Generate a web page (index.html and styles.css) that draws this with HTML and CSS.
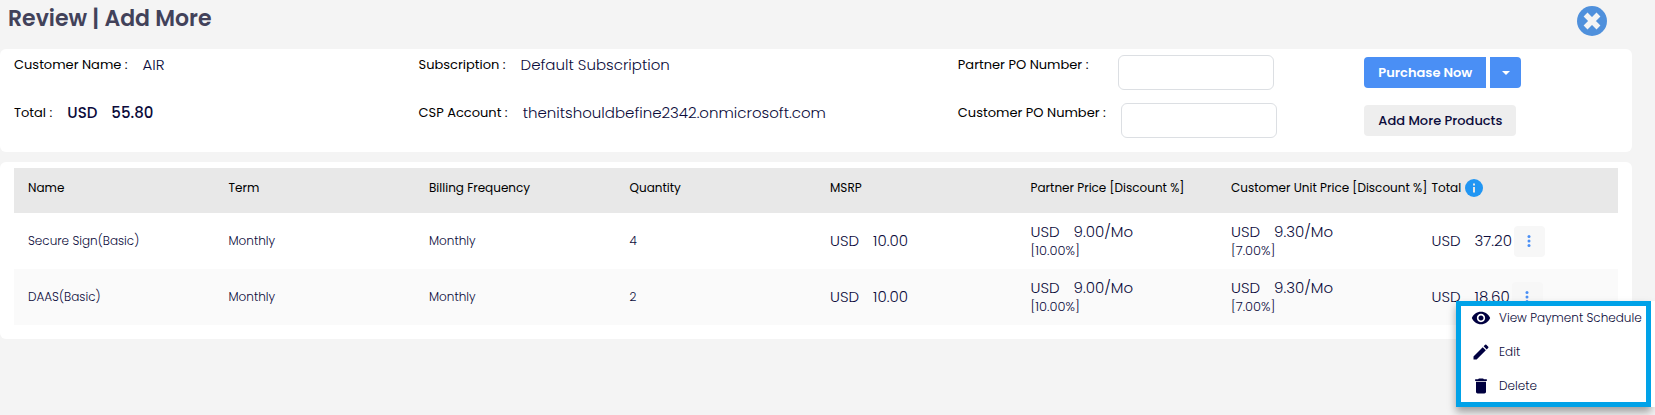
FILE: index.html
```html
<!DOCTYPE html>
<html lang="en">
<head>
<meta charset="utf-8">
<title>Review | Add More</title>
<link rel="stylesheet" href="styles.css">
</head>
<body>
<header class="page-head">
  <h1 class="title">Review | Add More</h1>
  <button class="close" type="button" aria-label="Close">
    <svg viewBox="0 0 30 30" width="30" height="30"><circle cx="15" cy="15" r="15" fill="#4f90dc"/><path d="M10.500 10.500l9 9M19.500 10.500l-9 9" stroke="#f4f4f4" stroke-width="5.500" stroke-linecap="square"/></svg>
  </button>
</header>
<main class="content">
  <section class="card summary">
    <dl class="facts">
      <div class="fact"><dt>Customer Name :</dt><dd>AIR</dd></div>
      <div class="fact"><dt>Total :</dt><dd class="money strong"><span>USD</span><span>55.80</span></dd></div>
    </dl>
    <dl class="facts">
      <div class="fact"><dt>Subscription :</dt><dd>Default Subscription</dd></div>
      <div class="fact"><dt>CSP Account :</dt><dd>thenitshouldbefine2342.onmicrosoft.com</dd></div>
    </dl>
    <div class="facts">
      <div class="fact"><label class="po-label" for="partner-po">Partner PO Number :</label><input class="field" id="partner-po" type="text"></div>
      <div class="fact"><label class="po-label" for="customer-po">Customer PO Number :</label><input class="field" id="customer-po" type="text"></div>
    </div>
    <div class="actions">
      <div class="split">
        <button class="btn primary start" type="button">Purchase Now</button>
        <button class="btn primary toggle" type="button" aria-label="More purchase options"><svg viewBox="0 0 8 4" width="8" height="4"><path d="M0 0h8L4 4z" fill="#fff"/></svg></button>
      </div>
      <button class="btn plain" type="button">Add More Products</button>
    </div>
  </section>
  <section class="card listing">
    <table class="items">
      <thead>
        <tr><th>Name</th><th>Term</th><th>Billing Frequency</th><th>Quantity</th><th>MSRP</th><th>Partner Price [Discount %]</th><th>Customer Unit Price [Discount %]</th>
        <th><span class="total-head">Total <svg viewBox="0 0 18 18" width="18" height="18" role="img" aria-label="Info"><circle cx="9" cy="9" r="9" fill="#2196f3"/><path d="M8 4.500h2v2H8zM8 8h2v5.500H8z" fill="#e8e8e8"/></svg></span></th></tr>
      </thead>
      <tbody>
        <tr>
          <td>Secure Sign(Basic)</td><td>Monthly</td><td>Monthly</td><td>4</td>
          <td><span class="money"><span>USD</span><span>10.00</span></span></td>
          <td><span class="money"><span>USD</span><span>9.00/Mo</span></span><span class="pct">[10.00%]</span></td>
          <td><span class="money"><span>USD</span><span>9.30/Mo</span></span><span class="pct">[7.00%]</span></td>
          <td><div class="total"><span class="money"><span>USD</span><span>37.20</span></span><button class="more" type="button" aria-label="Actions"><svg viewBox="0 0 4 12" width="4" height="12" fill="#4a8ff5"><circle cx="2" cy="1.500" r="1.500"/><circle cx="2" cy="6" r="1.500"/><circle cx="2" cy="10.500" r="1.500"/></svg></button></div></td>
        </tr>
        <tr>
          <td>DAAS(Basic)</td><td>Monthly</td><td>Monthly</td><td>2</td>
          <td><span class="money"><span>USD</span><span>10.00</span></span></td>
          <td><span class="money"><span>USD</span><span>9.00/Mo</span></span><span class="pct">[10.00%]</span></td>
          <td><span class="money"><span>USD</span><span>9.30/Mo</span></span><span class="pct">[7.00%]</span></td>
          <td class="anchor"><div class="total"><span class="money"><span>USD</span><span>18.60</span></span><button class="more" type="button" aria-label="Actions"><svg viewBox="0 0 4 12" width="4" height="12" fill="#4a8ff5"><circle cx="2" cy="1.500" r="1.500"/><circle cx="2" cy="6" r="1.500"/><circle cx="2" cy="10.500" r="1.500"/></svg></button></div>
            <div class="menu">
              <button class="menu-item" type="button"><svg viewBox="0 0 24 24" width="20" height="20"><path d="M12 4.500C7 4.500 2.730 7.610 1 12c1.730 4.390 6 7.500 11 7.500s9.270-3.110 11-7.500c-1.730-4.390-6-7.500-11-7.500zM12 17c-2.760 0-5-2.240-5-5s2.240-5 5-5 5 2.240 5 5-2.240 5-5 5zm0-8c-1.660 0-3 1.340-3 3s1.340 3 3 3 3-1.340 3-3-1.340-3-3-3z"/></svg>View Payment Schedule</button>
              <button class="menu-item" type="button"><svg viewBox="0 0 24 24" width="20" height="20"><path d="M3 17.250V21h3.750L17.810 9.940l-3.750-3.750L3 17.250zM20.710 7.040a1 1 0 0 0 0-1.410l-2.340-2.340a1 1 0 0 0-1.410 0l-1.830 1.830 3.750 3.750 1.830-1.830z"/></svg>Edit</button>
              <button class="menu-item" type="button"><svg viewBox="0 0 24 24" width="20" height="20"><path d="M6 19c0 1.100.9 2 2 2h8c1.100 0 2-.9 2-2V7H6v12zM19 4h-3.500l-1-1h-5l-1 1H5v2h14V4z"/></svg>Delete</button>
            </div>
          </td>
        </tr>
      </tbody>
    </table>
  </section>
</main>
</body>
</html>
```
FILE: styles.css
```css
* { box-sizing: border-box; }
body {
  margin: 0;
  min-height: 100vh;
  background: #f4f4f4;
  color: #0b0b3b;
  font-family: Poppins, Inter, "Open Sans", sans-serif;
  font-size: 13px;
  line-height: 20px;
}
button, input { font: inherit; color: inherit; }
button { border: 0; padding: 0; cursor: pointer; }
svg { display: block; flex: none; }

.page-head {
  display: flex;
  justify-content: space-between;
  align-items: flex-start;
  padding: 6px 48px 7px 8px;
}
.title { margin: 0; font-size: 22px; line-height: 26px; font-weight: 600; color: #42425a; }
.close { background: none; border-radius: 50%; height: 30px; margin-bottom: 6px; }

.content { display: grid; gap: 10px; margin-right: 23px; }
.card { background: #fff; border-radius: 6px; }

.summary {
  display: grid;
  grid-template-columns: 3fr 4fr 3fr 2fr;
  padding: 6px 0 14px 14px;
}
.facts { display: grid; grid-auto-rows: 35px; gap: 13px; margin: 0; }
.fact { display: flex; align-items: flex-start; gap: 15px; }
dt, .po-label { color: #000; font-size: 13px; font-weight: 400; white-space: nowrap; }
dd { margin: 0; font-size: 15px; font-weight: 300; white-space: nowrap; }
.field {
  width: 156px;
  height: 35px;
  padding: 0 10px;
  border: 1px solid #dcdfe3;
  border-radius: 6px;
  background: #fff;
}
.po-label { min-width: 145px; }
.money { display: flex; gap: 14px; font-size: 15px; font-weight: 300; white-space: nowrap; }
.money.strong { font-weight: 500; }

.actions { display: grid; grid-auto-rows: 31px; gap: 17px; padding: 2px 0 0 2px; justify-items: start; }
.split { display: flex; gap: 4px; }
.btn { height: 31px; padding: 0 14px; border-radius: 4px; font-weight: 500; white-space: nowrap; }
.primary { background: #4a8ff5; color: #fff; font-weight: 600; }
.start { border-radius: 4px 0 0 4px; }
.toggle { display: grid; place-items: center; width: 31px; padding: 0; border-radius: 0 4px 4px 0; }
.plain { background: #eee; }

.listing { padding: 6px 14px 14px; }
.items { width: 100%; table-layout: fixed; border-collapse: collapse; }
th { height: 45px; padding: 0 0 5px 14px; background: #e8e8e8; color: #000; font-size: 12px; font-weight: 400; text-align: left; white-space: nowrap; }
td { height: 56px; padding: 0 0 0 14px; font-size: 12px; font-weight: 300; white-space: nowrap; }
tbody tr:nth-child(even) { background: #fafafa; }
.total-head { display: flex; align-items: center; gap: 4px; }
.pct { display: block; font-size: 13px; line-height: 18px; }
.total { display: flex; align-items: center; gap: 2px; }
.more { display: grid; place-items: center; width: 31px; height: 31px; border-radius: 4px; background: #f7f7f7; }

.anchor { position: relative; }
.menu {
  position: absolute;
  top: 32px;
  right: -33px;
  display: grid;
  gap: 10px;
  width: 195px;
  padding-bottom: 4px;
  border: 5px solid #00a2e8;
  background: #fff;
  box-shadow: 4px 0 0 #fff, 0 5px 8px rgba(0, 0, 0, 0.35);
}
.menu-item { display: flex; align-items: center; gap: 8px; height: 24px; padding: 0 0 0 10px; background: none; font-size: 12px; font-weight: 300; white-space: nowrap; }
.menu-item svg { fill: #000040; }
```
